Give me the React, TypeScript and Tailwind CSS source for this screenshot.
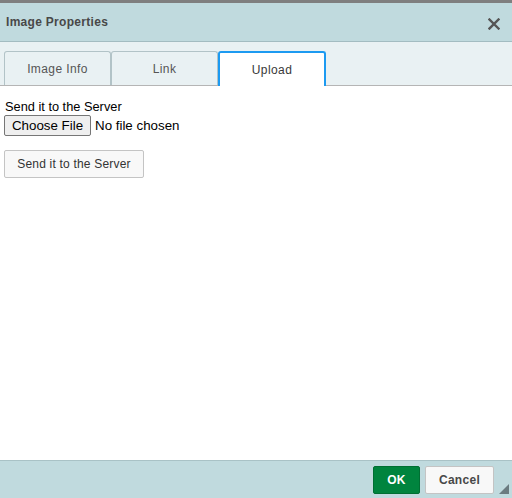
import React from "react";

const tabs = ["Image Info", "Link", "Upload"];

function App() {
  const active = "Upload";
  return (
    <div className="w-[512px] h-[498px] flex flex-col bg-white border-t-[3px] border-[#7f7f7f] font-['Liberation_Sans',Arial,sans-serif] text-[#484848]">
      {/* title bar */}
      <div className="h-[39px] flex items-center justify-between bg-[#c0dade] border-b border-[#a3bcc1] pl-[6px] pr-[12px]">
        <span className="text-[12px] font-bold tracking-[0.3px]">Image Properties</span>
        <svg width="12" height="12" viewBox="0 0 12 12" className="mt-[3px]">
          <path d="M1.5 1.5 L10.5 10.5 M10.5 1.5 L1.5 10.5" stroke="#555" strokeWidth="2.4" strokeLinecap="square" />
        </svg>
      </div>

      {/* tabs */}
      <div className="h-[44px] flex items-end bg-[#e9f1f3] border-b border-[#b5b5b5] pl-[4px]">
        {tabs.map((t) =>
          t === active ? (
            <div
              key={t}
              className="w-[108px] h-[35px] -mb-px flex items-center justify-center bg-white border-2 border-b-0 border-[#1c9af1] rounded-t-[3px] text-[12px] tracking-[0.4px] text-[#383838]"
            >
              {t}
            </div>
          ) : (
            <div
              key={t}
              className="w-[107px] h-[34px] flex items-center justify-center bg-[#e9f1f3] border border-b-0 border-[#b2c3c7] rounded-t-[3px] text-[12px] tracking-[0.4px] text-[#555]"
            >
              {t}
            </div>
          )
        )}
      </div>

      {/* body */}
      <div className="flex-1 flex flex-col items-start pl-[5px] pt-[13px] text-black">
        <label className="leading-[15px] text-[12.8px]">Send it to the Server</label>
        <div className="flex items-center mt-[1px] text-[13.33px]">
          <button className="h-[21px] w-[87px] bg-[#efefef] border border-[#767676] rounded-[2px] text-black leading-none -ml-[1px]">
            Choose File
          </button>
          <span className="ml-[4px]">No file chosen</span>
        </div>
        <button className="mt-[14px] -ml-[1px] w-[140px] h-[28px] bg-[#f8f8f8] border border-[#c4c4c4] rounded-[2px] text-[12px] tracking-[0.2px] text-[#333]">
          Send it to the Server
        </button>
      </div>

      {/* footer */}
      <div className="h-[38px] relative flex items-center justify-end bg-[#c0dade] border-t border-[#a9c2c6] pr-[18px] gap-[5px]">
        <button className="w-[47px] h-[28px] bg-[#00843e] border border-[#006f33] rounded-[2px] text-white text-[12px] font-bold tracking-[0.3px]">
          OK
        </button>
        <button className="w-[69px] h-[28px] bg-[#f8f8f8] border border-[#c4c4c4] rounded-[2px] text-[#484848] text-[12px] font-bold tracking-[0.3px]">
          Cancel
        </button>
        <svg width="10" height="10" viewBox="0 0 10 10" className="absolute right-[3px] bottom-[4px]">
          <path d="M10 0 L10 10 L0 10 Z" fill="#6b7b80" />
        </svg>
      </div>
    </div>
  );
}

export default App;
